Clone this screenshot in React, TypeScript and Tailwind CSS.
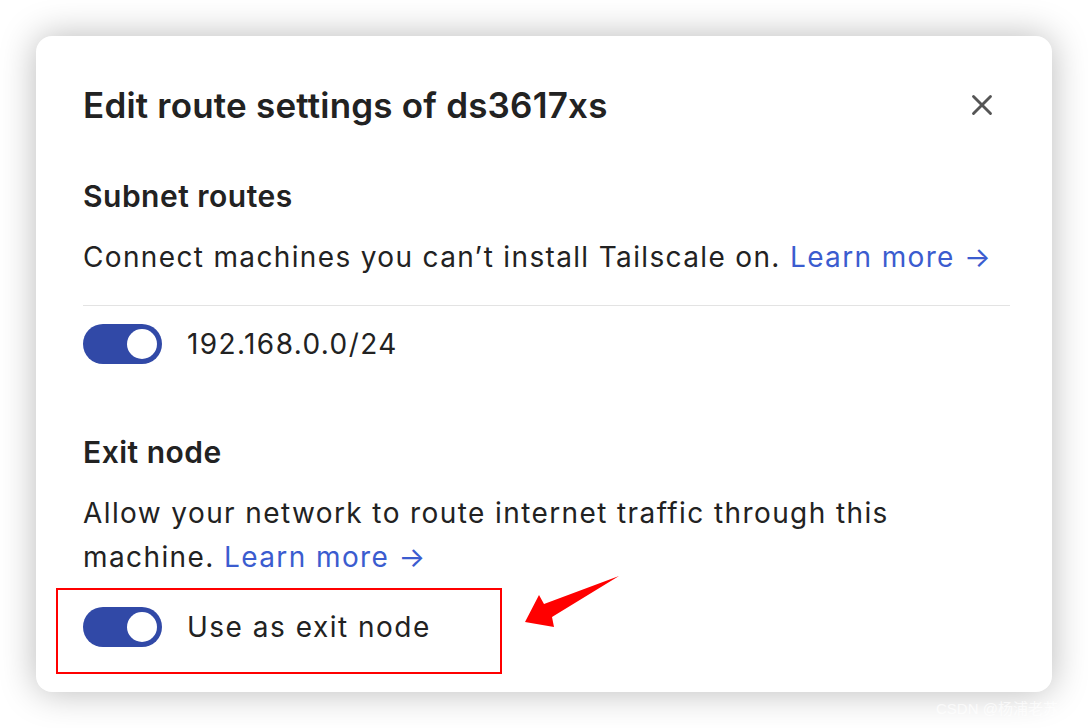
import { X } from "lucide-react";

function Toggle() {
  return (
    <div className="flex items-center justify-end w-[79px] h-[40px] rounded-full bg-[#3149a7] pr-[5px] shrink-0">
      <div className="w-[30px] h-[30px] rounded-full bg-white" />
    </div>
  );
}

export default function App() {
  return (
    <div
      className="relative w-[1088px] h-[728px] bg-white p-[36px] text-[#222222]"
      style={{ fontFamily: "Inter, 'Noto Sans', sans-serif" }}
    >
      <div className="flex flex-col w-[1016px] h-[656px] rounded-[16px] bg-white shadow-[0_0_36px_rgba(0,0,0,0.28)] pt-[49px] pl-[47px] pr-[42px]">
        <div className="flex items-center justify-between h-[40px]">
          <h1 className="text-[35px] font-semibold leading-[40px] tracking-[0.2px]">
            Edit route settings of ds3617xs
          </h1>
          <X className="w-[34px] h-[34px] mr-[11px] text-[#555555]" strokeWidth={2} />
        </div>

        <h2 className="mt-[55px] text-[30px] font-semibold leading-[32px] tracking-[0.5px]">
          Subnet routes
        </h2>
        <p className="mt-[23px] text-[28px] leading-[44px] tracking-[1.35px]">
          Connect machines you can’t install Tailscale on.{" "}
          <span className="text-[#3b5ccf]">Learn more →</span>
        </p>
        <div className="mt-[26px] h-px bg-[#e3e3e3]" />

        <div className="mt-[18px] flex items-center gap-[25px] h-[40px]">
          <Toggle />
          <span className="text-[28px] tracking-[1.4px]">192.168.0.0/24</span>
        </div>

        <h2 className="mt-[72px] text-[30px] font-semibold leading-[32px] tracking-[0.5px]">
          Exit node
        </h2>
        <p className="mt-[23px] text-[28px] leading-[44px] tracking-[1.4px]">
          Allow your network to route internet traffic through this machine.{" "}
          <span className="text-[#3b5ccf]">Learn more →</span>
        </p>

        <div className="mt-[28px] flex items-center gap-[25px] h-[40px]">
          <Toggle />
          <span className="text-[28px] tracking-[1.5px]">Use as exit node</span>
        </div>
      </div>

      {/* annotation box */}
      <div className="absolute left-[56px] top-[588px] w-[446px] h-[86px] border-2 border-[#ff0000]" />

      {/* annotation arrow */}
      <svg className="absolute left-0 top-0 pointer-events-none" width="1088" height="728">
        <polygon
          points="525,622 539,595 544,604 619,576 552,617 554,627"
          fill="#ff0000"
        />
      </svg>

      <span
        className="absolute left-[936px] top-[698px] text-[15px] text-white/70"
        style={{ fontFamily: "'Liberation Sans', 'Noto Sans CJK SC', sans-serif" }}
      >
        CSDN @杨浦老苏
      </span>
    </div>
  );
}
